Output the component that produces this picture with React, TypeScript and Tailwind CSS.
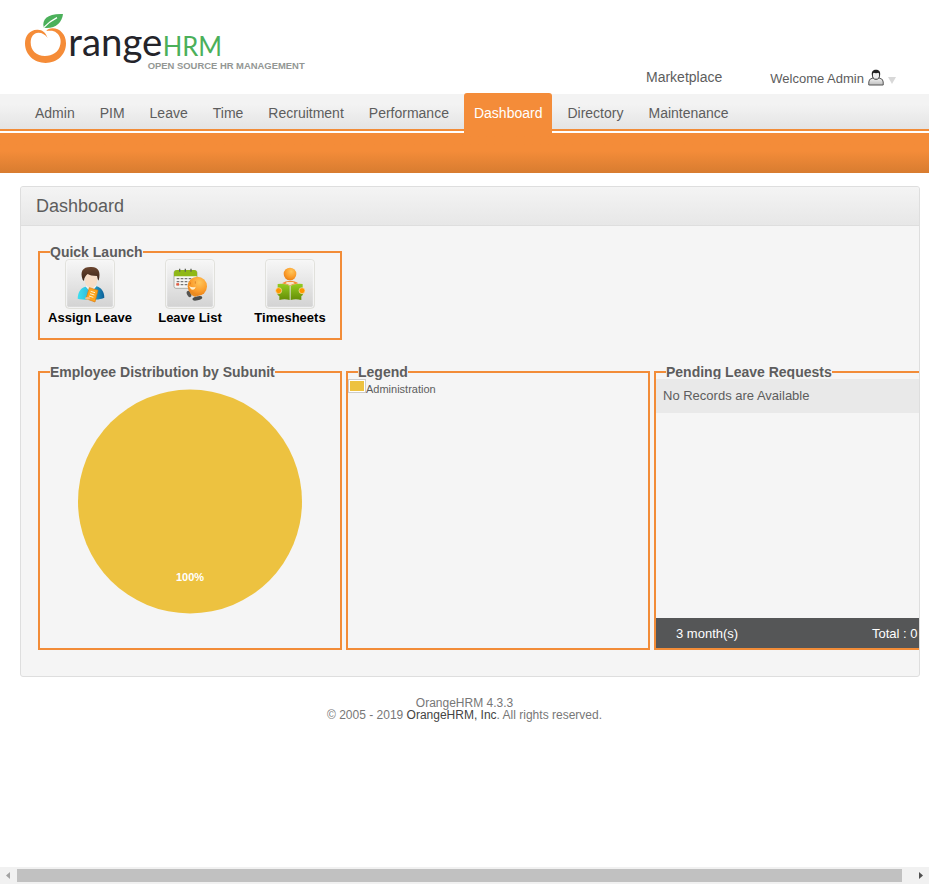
import React from "react";

const menu = ["Admin", "PIM", "Leave", "Time", "Recruitment", "Performance", "Dashboard", "Directory", "Maintenance"];

function Logo() {
  return (
    <svg className="block" width="300" height="75" viewBox="0 0 900 225">
      <path
        fill="#f58c38"
        d="M98 99C92 82 82 73 66 74C44 75 30 92 30 115C30 150 58 174 92 174C126 174 153 150 153 115C153 88 134 70 113 70C104 70 97 73 94 78C108 76 118 77 124 83C135 91 139 105 136 118C132 142 112 153 90 153C64 153 47 137 47 112C47 95 56 84 70 83C82 83 91 89 98 99Z"
      />
      <path fill="#4bb05a" d="M86 67C80 42 98 25 144 27C141 52 124 70 92 69Z" />
      <path fill="none" stroke="#fff" strokeWidth="4" d="M87 67C97 56 110 46 126 38" />
      <text x="160" y="154" fontSize="113" textLength="282" lengthAdjust="spacingAndGlyphs" fill="#24242a" style={{ fontFamily: "Lato, sans-serif" }}>range</text>
      <text x="443" y="154" fontSize="78" textLength="178" lengthAdjust="spacingAndGlyphs" fill="#4bb05a" style={{ fontFamily: "Lato, sans-serif" }}>HRM</text>
      <text x="398" y="191" fontSize="29" fontWeight="bold" textLength="471" lengthAdjust="spacingAndGlyphs" fill="#939794" style={{ fontFamily: "'Liberation Sans', Arial, sans-serif" }}>OPEN SOURCE HR MANAGEMENT</text>
    </svg>
  );
}

function Tile({ children }: { children: React.ReactNode }) {
  return (
    <svg className="block" width="50" height="50" viewBox="0 0 150 150">
      <defs>
        <linearGradient id="tile" x1="0" y1="0" x2="0" y2="1">
          <stop offset="0" stopColor="#f7f7f7" />
          <stop offset="1" stopColor="#d2d2d2" />
        </linearGradient>
        <linearGradient id="hair" x1="0" y1="0" x2="0" y2="1">
          <stop offset="0" stopColor="#6b4630" />
          <stop offset="1" stopColor="#3b2316" />
        </linearGradient>
        <linearGradient id="shirt">
          <stop offset="0" stopColor="#3ce0f0" />
          <stop offset="0.5" stopColor="#2bb4d8" />
          <stop offset="1" stopColor="#0d5e96" />
        </linearGradient>
        <radialGradient id="ball" cx="0.6" cy="0.3" r="0.75">
          <stop offset="0" stopColor="#ffc65c" />
          <stop offset="0.6" stopColor="#fb9d2b" />
          <stop offset="1" stopColor="#e77c14" />
        </radialGradient>
        <linearGradient id="leafy" x1="0" y1="0" x2="0" y2="1">
          <stop offset="0" stopColor="#95cd22" />
          <stop offset="1" stopColor="#658d06" />
        </linearGradient>
      </defs>
      <rect x="2" y="2" width="146" height="146" rx="9" fill="url(#tile)" stroke="#deded8" strokeWidth="3" />
      <rect x="5" y="5" width="140" height="140" rx="6" fill="none" stroke="#f8f8f8" strokeWidth="3" />
      {children}
    </svg>
  );
}

function AssignIcon() {
  return (
    <Tile>
      <path fill="url(#shirt)" d="M38 119C39 97 48 86 62 83L78 96L94 82C109 86 118 98 118 116C105 124 53 124 38 119Z" />
      <path fill="#eef6fa" d="M62 82L78 103L94 82L88 77H67Z" />
      <ellipse cx="78" cy="62" rx="19" ry="26" fill="#f7ddc7" />
      <path fill="url(#hair)" d="M53 62C44 38 53 24 76 24C101 22 108 40 101 64C99 66 97 56 96 51C83 51 73 49 68 45C62 50 57 57 57 66Z" />
      <path fill="#ffa51d" stroke="#d9780a" strokeWidth="2" d="M73 86L99 94L90 129L63 119Z" />
      <path stroke="#fff2c8" strokeWidth="3" d="M77 97L90 101M75 104L88 108M72 111L85 115" />
      <ellipse cx="68" cy="118" rx="8" ry="4" fill="#f6bd87" />
    </Tile>
  );
}

function LeaveIcon() {
  return (
    <Tile>
      <rect x="27" y="35" width="69" height="53" rx="6" fill="#f6f6f3" stroke="#8e9188" strokeWidth="2" />
      <path fill="#8fb817" d="M27 52V42Q27 33 36 33H87Q96 33 96 42V52Z" />
      <path stroke="#5f6557" strokeWidth="4" d="M44 29V38M61 29V38M78 29V38" />
      <path stroke="#777" strokeWidth="4" strokeDasharray="8 4" d="M35 59H90M35 68H90M35 77H72" />
      <path stroke="#e55a40" strokeWidth="7" d="M34 76H42" />
      <ellipse cx="72" cy="105" rx="6" ry="10" fill="#555451" transform="rotate(-25 72 105)" />
      <ellipse cx="97" cy="118" rx="15" ry="6" fill="#494b49" transform="rotate(-12 97 118)" />
      <circle cx="97" cy="82" r="29" fill="url(#ball)" />
      <path fill="#fff1ce" d="M72 81Q83 88 92 83Q89 95 78 91Z" />
      <path fill="none" stroke="#ce6c18" strokeWidth="2" d="M76 70V76M91 67V74" />
      <ellipse cx="86" cy="106" rx="10" ry="5" fill="#e98c22" transform="rotate(30 86 106)" />
    </Tile>
  );
}

function TimeIcon() {
  return (
    <Tile>
      <circle cx="75" cy="45" r="19" fill="url(#ball)" />
      <path fill="#f58d35" d="M51 73Q60 65 75 65Q91 65 100 73L75 80Z" />
      <path fill="#f5e4cb" d="M61 73L75 79L89 73L84 69H66Z" />
      <path fill="url(#leafy)" d="M38 75Q57 72 74 80V123Q59 118 43 123V111Q35 110 38 99ZM113 75Q94 72 77 80V123Q92 118 109 123V111Q116 110 113 99Z" />
      <circle cx="41" cy="95" r="9" fill="#ff9600" stroke="#f3e4ba" strokeWidth="2" />
      <circle cx="111" cy="95" r="9" fill="#ff9600" stroke="#f3e4ba" strokeWidth="2" />
    </Tile>
  );
}

function Group({ title, children, className }: { title: string; children?: React.ReactNode; className: string }) {
  return (
    <fieldset className={`w-[304px] shrink-0 border-2 border-[#f28c38] ${className}`}>
      <legend className="ml-[10px] h-4 text-[14px] leading-4 font-bold text-[#5d5d5d]">{title}</legend>
      {children}
    </fieldset>
  );
}

const shortcuts = [
  { label: "Assign Leave", icon: <AssignIcon /> },
  { label: "Leave List", icon: <LeaveIcon /> },
  { label: "Timesheets", icon: <TimeIcon /> },
];

export default function App() {
  return (
    <div className="flex h-[884px] w-[929px] flex-col overflow-hidden bg-white text-[#5d5d5d]" style={{ fontFamily: "'Liberation Sans', Arial, sans-serif" }}>
      <header className="flex h-[93px] shrink-0 items-start pt-[5px] pl-[15px]">
        <Logo />
        <span className="mt-[64px] ml-[331px] text-[14px] leading-4">Marketplace</span>
        <span className="mt-[66px] ml-[48px] text-[13px] leading-4 whitespace-nowrap">Welcome Admin</span>
        <svg className="mt-[64px] ml-[4px]" width="16" height="17" viewBox="0 0 16 17">
          <defs>
            <linearGradient id="body" x1="0" y1="0" x2="0" y2="1">
              <stop offset="0" stopColor="#f8f8f8" />
              <stop offset="1" stopColor="#bdbdbd" />
            </linearGradient>
          </defs>
          <path fill="url(#body)" stroke="#555" d="M.8 16V13Q.8 10 4 9.3L6 8.6H10L12 9.3Q15.2 10 15.2 13V16Z" />
          <ellipse cx="8" cy="6" rx="3.6" ry="4.3" fill="#eee" stroke="#333" strokeWidth="1" />
          <path fill="#222" d="M3.9 6C3.4 2.4 5.2.8 8 .8S12.6 2.4 12.1 6L10.5 3.8Q8 4.6 5.5 3.8Z" />
        </svg>
        <svg className="mt-[72px] ml-[4px]" width="8" height="7" viewBox="0 0 8 7"><path fill="#d8d8d8" d="M0 0H8L4 7Z" /></svg>
      </header>
      <nav className="flex h-[40px] shrink-0 flex-col">
        <div className="mt-px h-[35px] shrink-0 bg-linear-to-b from-[#f3f3f3] from-30% to-[#e4e4e4]" />
        <div className="h-[2px] shrink-0 bg-[#f28c38]" />
        <ul className="-mt-[38px] flex h-[40px] shrink-0 gap-[5px] pl-[25px] text-[14px] leading-10">
          {menu.map((m) => (
            <li key={m} className={m === "Dashboard" ? "rounded-t-[3px] bg-[#f48c39] px-[10px] text-white" : "px-[10px]"}>{m}</li>
          ))}
        </ul>
      </nav>
      <div className="h-[40px] shrink-0 bg-linear-to-b from-[#f48c39] from-45% to-[#d87c30]" />
      <main className="mt-[13px] ml-[20px] h-[491px] w-[900px] shrink-0 overflow-hidden rounded-[3px] border border-[#dedede] bg-[#f5f5f5]">
        <h1 className="h-[39px] border-b border-[#dedede] bg-linear-to-b from-[#f4f4f4] to-[#e7e7e7] pl-[15px] text-[18px] leading-[38px]">Dashboard</h1>
        <div className="flex flex-col gap-[24px] pt-[18px] pl-[17px]">
          <Group title="Quick Launch" className="h-[96px]">
            <div className="-mt-px grid grid-cols-3">
              {shortcuts.map((s) => (
                <div key={s.label} className="flex flex-col items-center">
                  {s.icon}
                  <span className="text-[13px] leading-[17px] font-bold whitespace-nowrap text-black">{s.label}</span>
                </div>
              ))}
            </div>
          </Group>
          <div className="flex gap-1">
            <Group title="Employee Distribution by Subunit" className="h-[286px]">
              <svg className="block" width="300" height="260" viewBox="0 0 300 260">
                <circle cx="150" cy="121.5" r="112" fill="#edc240" />
                <text x="150" y="201" textAnchor="middle" fontSize="11" fontWeight="bold" fill="#fff">100%</text>
              </svg>
            </Group>
            <Group title="Legend" className="h-[286px]">
              <div className="-mt-px flex">
                <div className="h-[14px] w-[18px] border border-[#ccc] bg-white p-px">
                  <div className="h-full bg-[#edc240]" />
                </div>
                <span className="mt-[4px] text-[11px] leading-[13px]">Administration</span>
              </div>
            </Group>
            <Group title="Pending Leave Requests" className="h-[286px]">
              <div className="-mt-px flex h-[269px] flex-col justify-between">
                <p className="h-[34px] bg-[#e9e9e9] pl-[7px] text-[13px] leading-[33px]">No Records are Available</p>
                <div className="flex h-[30px] bg-[#555657] pl-[20px] text-[13px] leading-8 text-white">
                  <span className="w-[196px]">3 month(s)</span>
                  <span className="whitespace-nowrap">Total : 0</span>
                </div>
              </div>
            </Group>
          </div>
        </div>
      </main>
      <footer className="mt-[20px] text-center text-[12px] leading-3 text-[#777]">
        <p>OrangeHRM 4.3.3</p>
        <p>© 2005 - 2019 <a className="text-[#444]">OrangeHRM, Inc</a>. All rights reserved.</p>
      </footer>
      <div className="mt-auto flex h-[17px] shrink-0 items-center bg-[#f1f1f1]">
        <svg width="17" height="17" viewBox="0 0 17 17"><path fill="#a3a3a3" d="M10 5V12L6 8.5Z" /></svg>
        <div className="h-[13px] w-[885px] bg-[#c1c1c1]" />
        <svg className="ml-[10px]" width="17" height="17" viewBox="0 0 17 17"><path fill="#505050" d="M7 5V12L11 8.5Z" /></svg>
      </div>
    </div>
  );
}
